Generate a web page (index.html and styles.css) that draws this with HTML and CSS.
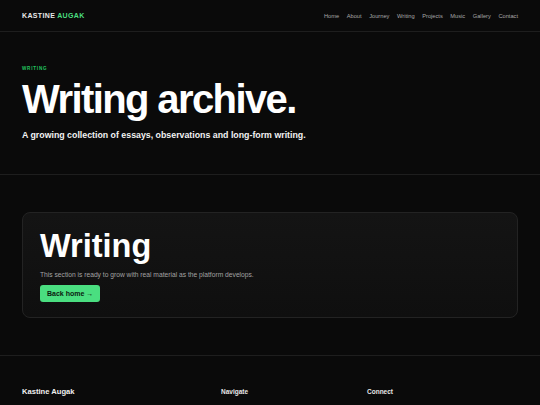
FILE: index.html
```html
<!DOCTYPE html>
<html lang="en">
<head>
<meta charset="utf-8">
<title>Writing archive — Kastine Augak</title>
<link rel="stylesheet" href="styles.css">
</head>
<body>
<header class="site-header">
  <a class="logo" href="#">KASTINE <span class="accent">AUGAK</span></a>
  <nav class="nav">
    <a href="#">Home</a>
    <a href="#">About</a>
    <a href="#">Journey</a>
    <a href="#">Writing</a>
    <a href="#">Projects</a>
    <a href="#">Music</a>
    <a href="#">Gallery</a>
    <a href="#">Contact</a>
  </nav>
</header>
<section class="hero">
  <div class="eyebrow">WRITING</div>
  <h1 class="hero-title">Writing archive.</h1>
  <p class="hero-sub">A growing collection of essays, observations and long-form writing.</p>
</section>
<section class="content">
  <div class="card">
    <h2 class="card-title">Writing</h2>
    <p class="card-text">This section is ready to grow with real material as the platform develops.</p>
    <a class="btn" href="#">Back home →</a>
  </div>
</section>
<footer class="footer">
  <div class="footer-brand">Kastine Augak</div>
  <div class="footer-head">Navigate</div>
  <div class="footer-head">Connect</div>
</footer>
</body>
</html>
```
FILE: styles.css
```css
* { box-sizing: border-box; }
html, body { margin: 0; padding: 0; }
body {
  background: #0a0a0a;
  color: #fff;
  font-family: "Liberation Sans", Arial, sans-serif;
  width: 540px;
  min-height: 405px;
  overflow: hidden;
}
a { text-decoration: none; color: inherit; }

.site-header {
  height: 32px;
  padding: 0 22px;
  display: flex;
  align-items: center;
  justify-content: space-between;
  border-bottom: 1px solid #1e1e1e;
}
.logo {
  font-size: 7px;
  font-weight: 700;
  letter-spacing: 0.05em;
  color: #e8e8e8;
}
.logo .accent { color: #4ade80; }
.nav {
  display: flex;
  gap: 7.6px;
}
.nav a {
  font-size: 5.7px;
  color: #a8a8a8;
}

.hero {
  padding: 34px 22px 33px;
  border-bottom: 1px solid #1e1e1e;
}
.eyebrow {
  font-size: 4.6px;
  line-height: 6px;
  font-weight: 700;
  letter-spacing: 0.17em;
  color: #22c55e;
}
.hero-title {
  margin: 7px 0 0;
  font-size: 40px;
  line-height: 1;
  font-weight: 700;
  letter-spacing: -0.04em;
  color: #fff;
}
.hero-sub {
  margin: 10px 0 0;
  font-size: 8.8px;
  line-height: 12px;
  font-weight: 700;
  color: #f2f2f2;
}

.content {
  padding: 37px 22px 37px;
  border-bottom: 1px solid #1e1e1e;
}
.card {
  border: 1px solid #232323;
  border-radius: 8px;
  background: linear-gradient(180deg, #141414 0%, #0f0f0f 100%);
  padding: 17px 17px 15px;
}
.card-title {
  margin: 0;
  font-size: 32.5px;
  line-height: 1;
  font-weight: 700;
  letter-spacing: 0;
  color: #fff;
}
.card-text {
  margin: 7.5px 0 0;
  font-size: 6.7px;
  line-height: 9px;
  color: #a3a3a3;
}
.btn {
  display: inline-flex;
  align-items: center;
  height: 17px;
  margin-top: 5.5px;
  padding: 0 7px;
  background: #4ade80;
  color: #0a1a0f;
  border-radius: 3px;
  font-size: 7px;
  font-weight: 700;
}

.footer {
  display: grid;
  grid-template-columns: 177px 124px 1fr;
  gap: 22px;
  padding: 31px 22px 0;
  align-items: center;
}
.footer-brand {
  font-size: 7.6px;
  font-weight: 700;
  line-height: 10px;
  color: #f0f0f0;
}
.footer-head {
  font-size: 6.5px;
  font-weight: 700;
  line-height: 10px;
  color: #e8e8e8;
}
```
